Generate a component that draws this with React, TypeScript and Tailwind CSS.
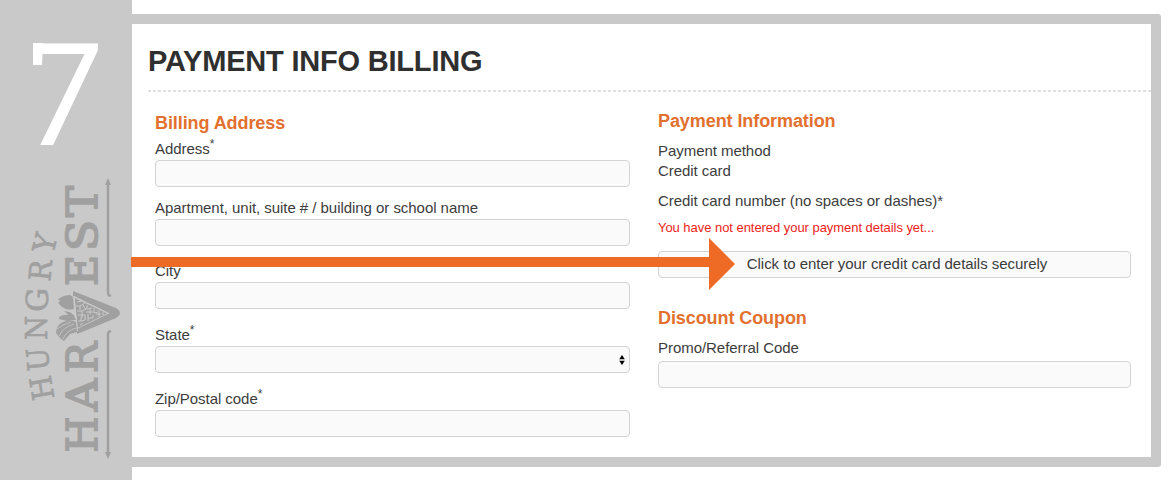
import type { ReactNode } from "react";

interface FieldProps {
  label: string;
  required?: boolean;
  className?: string;
  children?: ReactNode;
}

function Field({ label, required, className = "", children }: FieldProps) {
  return (
    <div className={className}>
      <div className="h-[22px] leading-[22px] whitespace-nowrap">
        {label}
        {required && <span className="relative -top-[6px] text-[12px]">*</span>}
      </div>
      <Box>{children}</Box>
    </div>
  );
}

function Box({ children }: { children?: ReactNode }) {
  return (
    <div className="flex h-[27px] items-center justify-center rounded-[4px] border border-[#d4d4d4] bg-[#fafafa]">
      {children}
    </div>
  );
}

function Heading({ children }: { children: ReactNode }) {
  return (
    <h2 className="text-[18px] leading-[24px] font-bold tracking-[-0.08px] text-[#e2702e]">{children}</h2>
  );
}

function SelectArrows() {
  return (
    <svg viewBox="0 0 6 10" className="ml-auto mr-1 h-[10px] w-[6px]">
      <path d="M3 0 5.800 4.300H.2ZM3 10 .2 5.700H5.800Z" fill="#000" />
    </svg>
  );
}

interface Glyph {
  char: string;
  x: number;
  y: number;
  width: number;
  angle: number;
}

const hungry: Glyph[] = [
  { char: "H", x: 54.5, y: 398, width: 24, angle: -100 },
  { char: "U", x: 49.5, y: 370, width: 23, angle: -95 },
  { char: "N", x: 47, y: 340, width: 24, angle: -90 },
  { char: "G", x: 47.5, y: 312, width: 24, angle: -89 },
  { char: "R", x: 50, y: 282, width: 21, angle: -84 },
  { char: "Y", x: 53, y: 255, width: 19, angle: -76 },
];

const harvest: Glyph[] = [
  { char: "H", x: 97, y: 452.5, width: 36, angle: -90 },
  { char: "A", x: 97, y: 411, width: 32, angle: -90 },
  { char: "R", x: 97, y: 373, width: 31, angle: -90 },
  { char: "E", x: 97, y: 286, width: 31, angle: -90 },
  { char: "S", x: 97, y: 251, width: 31, angle: -90 },
  { char: "T", x: 97, y: 217, width: 31, angle: -90 },
];

function Letters({ glyphs }: { glyphs: Glyph[] }) {
  return glyphs.map((g, i) => (
    <text
      key={i}
      textLength={g.width}
      lengthAdjust="spacingAndGlyphs"
      transform={`translate(${g.x} ${g.y}) rotate(${g.angle})`}
    >
      {g.char}
    </text>
  ));
}

function Sidebar() {
  return (
    <svg
      viewBox="0 0 132 480"
      className="h-[480px] w-[132px] shrink-0 bg-[#c9c9c9] font-['DejaVu_Serif',serif]"
      fill="#a0a0a0"
    >
      <text
        transform="translate(23 145) skewX(-3)"
        fontSize="143"
        textLength="75.5"
        lengthAdjust="spacingAndGlyphs"
        fill="#fff"
        className="font-[Roboto,sans-serif] tracking-normal"
      >
        7
      </text>
      <path d="M33 43H43L42 65H33Z" fill="#fff" />

      <g fontSize="30" stroke="#a0a0a0" strokeWidth=".7">
        <Letters glyphs={hungry} />
      </g>
      <g fontSize="43" stroke="#a0a0a0" strokeWidth="1.8">
        <Letters glyphs={harvest} />
      </g>

      {/* vertical arrows */}
      <g fill="none" stroke="#a0a0a0" strokeWidth="2.5" strokeLinecap="round">
        <path d="M108 184V292Q108 296 110 295.5" />
        <path d="M108 454V335Q108 331 110 331.5" />
      </g>
      <path d="M108 178 111 185H105Z" />
      <path d="M108 459 111 452H105Z" />

      {/* cornucopia */}
      <path d="M73 291 116 308Q124 313 116 318L77 334V329L109 313.500 73 296Z" />
      <path d="M74.500 298 107 313.500 77.500 328Z" />
      <path
        d="M77 302l5-1M76 306h4l5-3M80 306v4M77 311h5l4-2M83 305l3 5M78 315h4M82 311v7M78 321h3v-4M81 321l4-1v-5M85 315h-3M80 325l3-2M87 305v4l5-1M90 309v5M86 312h7M88 314v7M88 318h5M94 308v5l4-1M93 315v3M96 314h5M99 310v7M103 312v3"
        stroke="#c9c9c9"
        strokeWidth="1"
        fill="none"
      />
      <path d="M74 296 77.500 331M74 296.500 109 313.500" stroke="#c9c9c9" strokeWidth="1" fill="none" />
      <path d="M60 298Q64 295 70 295L73 297 74 309Q67 311 62 307L58 303 60 301 58 299Z" />
      <path d="M59 317Q65 313 74 316L76 320 67 321 59 319ZM64 311 70 312 75 316 71 317Z" />
      <path d="M56 333Q56 325 63 322 70 319 76 322L77 332 70 334 64 341 60 338Z" />
      <path
        d="M59 336Q63 327 74 324M63 339Q66 331 76 328M57 329Q62 325 71 322"
        fill="none"
        stroke="#c9c9c9"
        strokeWidth=".8"
      />
    </svg>
  );
}

function Arrow() {
  return (
    <svg viewBox="0 0 604 54" className="absolute left-[131px] top-[237px] h-[54px] w-[604px]">
      <path d="M0 20H578V1L604 27 578 53V30H0Z" fill="#ee6b26" />
    </svg>
  );
}

export default function App() {
  return (
    <div className="relative flex h-[480px] w-[1176px] overflow-hidden bg-white font-['Liberation_Sans',Arial,sans-serif] text-[15px] tracking-[-0.045px] text-[#3c3c3c]">
      <Sidebar />
      <main className="mt-[14px] h-[453px] w-[1029px] rounded-r-[3px] bg-[#c9c9c9] py-[10px] pr-[10px]">
        <div className="h-full bg-white pl-4">
          <h1 className="h-[66px] pt-[18px] text-[29px] leading-[38px] font-bold tracking-[-0.2px] text-[#2f2f2f]">
            PAYMENT INFO BILLING
          </h1>
          <div className="h-[2px] bg-[repeating-linear-gradient(90deg,#e0e0e0_0_3px,transparent_3px_5px)]"></div>

          <div className="flex">
            <section className="ml-[7px] w-[475px] pt-[19px]">
              <div className="mb-[3px]">
                <Heading>Billing Address</Heading>
              </div>
              <Field label="Address" required />
              <Field label="Apartment, unit, suite # / building or school name" className="mt-[10px]" />
              <Field label="City" className="mt-[14px]" />
              <Field label="State" required className="mt-[15px]">
                <SelectArrows />
              </Field>
              <Field label="Zip/Postal code" required className="mt-[14.5px]" />
            </section>

            <section className="ml-[28px] w-[473px] pt-[17px]">
              <Heading>Payment Information</Heading>
              <div className="mt-2 leading-[20px]">
                <p>Payment method</p>
                <p>Credit card</p>
                <p className="mt-[10px]">Credit card number (no spaces or dashes)*</p>
              </div>
              <p className="mt-[7px] mb-[13px] text-[13px] leading-[20px] text-[#ee2219]">
                You have not entered your payment details yet...
              </p>
              <Box>
                <span className="pl-[5px]">Click to enter your credit card details securely</span>
              </Box>
              <div className="mt-[28px] mb-[7px]">
                <Heading>Discount Coupon</Heading>
              </div>
              <p className="mb-[2px] leading-[22px]">Promo/Referral Code</p>
              <Box />
            </section>
          </div>
        </div>
      </main>
      <Arrow />
    </div>
  );
}
